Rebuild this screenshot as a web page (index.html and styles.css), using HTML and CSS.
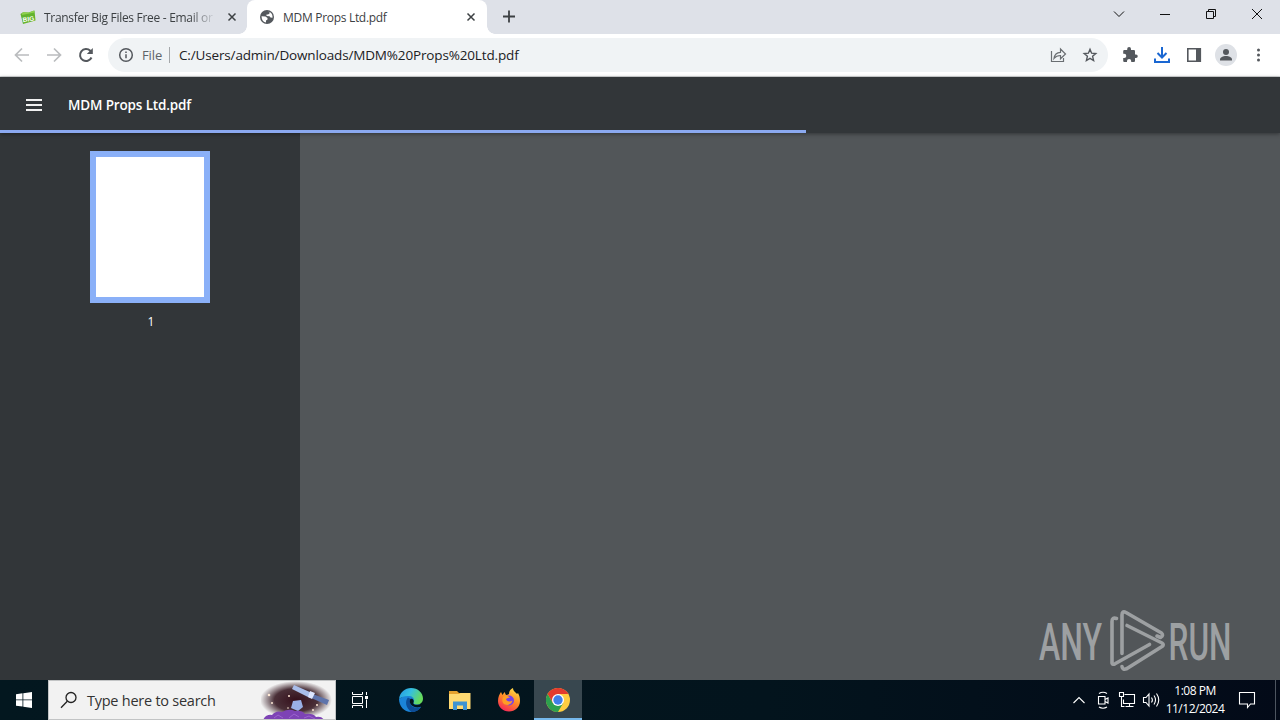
FILE: index.html
```html
<!DOCTYPE html>
<html lang="en">
<head>
  <meta charset="UTF-8">
  <meta name="viewport" content="width=device-width, initial-scale=1.0">
  <title>MDM Props Ltd.pdf</title>
  <link rel="stylesheet" href="styles.css">
</head>
<body>
  <!-- Tab strip -->
  <div class="tab-strip">
    <div class="tab">
      <svg class="favicon" width="16" height="16" viewBox="0 0 16 16">
        <path d="M.5 5 3 3.3l5.500.2L14.500 1.500 15.500 11.500 3 15z" fill="#63b32e"/>
        <path d="M2 4.500 3.500 3l5 .8 5.500-2.300.3 2L2 6z" fill="#8fd14f"/>
        <text class="favicon-text" x="2.500" y="12.500" transform="rotate(-9 8 9)">BIG</text>
      </svg>
      <span class="tab-title fade">Transfer Big Files Free - Email or</span>
      <svg class="tab-close" width="16" height="16" viewBox="0 0 16 16"><path d="M4.500 4.500l7 7M11.500 4.500l-7 7"/></svg>
    </div>
    <div class="tab active">
      <svg class="favicon" width="16" height="16" viewBox="0 0 16 16">
        <circle cx="8" cy="8" r="7" fill="#54585d"/>
        <path d="M2.500 7.200l4 .3 2 1.500v1.500l-1.500 1v2C4.500 13.200 2.500 11 2.500 7.200zM8.500 2.500l2 .5v1.500L9 5.500H7.500V7l3 .2 1 1.300 2 .2c.3-2-.5-4-2-5.200" fill="#fff"/>
      </svg>
      <span class="tab-title">MDM Props Ltd.pdf</span>
      <svg class="tab-close" width="16" height="16" viewBox="0 0 16 16"><path d="M4.500 4.500l7 7M11.500 4.500l-7 7"/></svg>
    </div>
    <svg class="new-tab" width="16" height="16" viewBox="0 0 16 16"><path d="M8 2.500v12M2 8.500h12"/></svg>
    <div class="window-controls">
      <svg width="46" height="28" viewBox="0 0 46 28"><path d="M18 11.500l5 5 5-5"/></svg>
      <svg width="46" height="28" viewBox="0 0 46 28"><path d="M18 14.500h10"/></svg>
      <svg width="46" height="28" viewBox="0 0 46 28"><path d="M18.500 11.500h7v7h-7zM20.500 11.500v-2h7v7h-2"/></svg>
      <svg width="46" height="28" viewBox="0 0 46 28"><path d="M18 9l10 10M28 9L18 19"/></svg>
    </div>
  </div>

  <!-- Toolbar -->
  <div class="toolbar">
    <svg class="tool disabled" width="32" height="32" viewBox="0 0 32 32"><path d="M23 16H10M16 9.500L9.500 16l6.500 6.500"/></svg>
    <svg class="tool disabled" width="32" height="32" viewBox="0 0 32 32"><path d="M9 16h13M16 9.500l6.500 6.500-6.500 6.500"/></svg>
    <svg class="tool" width="32" height="32" viewBox="0 0 32 32"><path d="M21.500 18.500a6 6 0 1 1-1.200-6.700l1.200 1.400"/><path d="M22.800 9v6h-6z" class="solid"/></svg>

    <div class="omnibox">
      <svg class="info" width="16" height="16" viewBox="0 0 16 16"><circle cx="8" cy="8" r="6.300"/><path d="M8 7.200v4M8 4.500v1.500"/></svg>
      <span class="scheme">File</span>
      <span class="url">C:/Users/admin/Downloads/MDM%20Props%20Ltd.pdf</span>
      <svg class="share" width="32" height="32" viewBox="0 0 32 32"><path d="M9.500 12v10.500h12V19"/><path d="M12 19.500c.5-4 3-6 6.500-6.200V10l5 5-5 4.800v-3.300c-2.800 0-4.800.8-6.500 3z"/></svg>
      <svg class="star" width="32" height="32" viewBox="0 0 32 32"><path d="M16 10.300l1.600 3.900 4.200.4-3.200 2.700 1 4.200-3.600-2.200-3.600 2.200 1-4.200-3.200-2.700 4.200-.4z"/></svg>
    </div>

    <svg class="tool" width="32" height="32" viewBox="0 0 32 32"><path class="solid" d="M22 15.500h-1V12.300c0-.8-.6-1.300-1.300-1.300H17v-1a1.900 1.900 0 0 0-3.800 0v1h-2.700c-.7 0-1.300.5-1.300 1.300v2.500h1a2.100 2.100 0 0 1 0 4.200h-1v2.700c0 .7.600 1.300 1.300 1.300H13v-1a2.100 2.100 0 0 1 4.200 0v1h2.500c.7 0 1.300-.6 1.300-1.300V19h1a1.750 1.750 0 0 0 0-3.500z"/></svg>
    <svg class="tool download" width="32" height="32" viewBox="0 0 32 32"><path d="M16 8v10M11.500 14l4.500 4.500 4.500-4.500M9 19.500v3.500h14v-3.500"/></svg>
    <svg class="tool panel" width="32" height="32" viewBox="0 0 32 32"><path d="M9.800 9.800h12.500v12.500H9.800z"/><path class="solid" d="M18 9h5v14h-5z"/></svg>
    <svg class="tool" width="32" height="32" viewBox="0 0 32 32"><circle class="avatar" cx="16" cy="16" r="11"/><circle class="solid" cx="16" cy="13" r="3"/><path class="solid" d="M10 21.500v-1c0-2.200 3-3.500 6-3.500s6 1.300 6 3.500v1z"/></svg>
    <svg class="tool" width="32" height="32" viewBox="0 0 32 32"><circle class="solid" cx="16.500" cy="11" r="1.500"/><circle class="solid" cx="16.500" cy="16" r="1.500"/><circle class="solid" cx="16.500" cy="21" r="1.500"/></svg>
  </div>

  <!-- PDF viewer -->
  <header class="pdf-header">
    <div class="menu-icon"><i></i><i></i><i></i></div>
    <h1>MDM Props Ltd.pdf</h1>
    <div class="progress"></div>
  </header>

  <main class="viewer">
    <aside class="sidebar">
      <div class="thumbnail"></div>
      <span class="page-number">1</span>
    </aside>
    <section class="page-area">
      <svg class="watermark" width="200" height="68" viewBox="0 0 200 68">
        <text x="3" y="53.500" textLength="63" lengthAdjust="spacingAndGlyphs">ANY</text>
        <text x="132.500" y="53.500" textLength="63" lengthAdjust="spacingAndGlyphs">RUN</text>
        <path d="M80.500 12.500q-4.500-1.500-4.500 3V57q.5 2 3 .8L113.500 38.500"/>
        <path d="M86 47.500V9q0-4.500 4-2.500L125.500 27q2.500 2.500-1 4.500l-3.500-1.500"/>
        <path d="M91 19.500L126 37q2.500 1.500 0 3.500L91 62.500q-4.500 2-5-2"/>
      </svg>
    </section>
  </main>

  <!-- Taskbar -->
  <footer class="taskbar">
    <div class="start">
      <svg width="16" height="16" viewBox="0 0 16 16"><path fill="#fff" d="M0 2.200l6.500-.9v6.200H0zM7.300 1.200L16 0v7.500H7.300zM0 8.300h6.500v6.300L0 13.700zM7.300 8.300H16V16l-8.700-1.200z"/></svg>
    </div>
    <div class="search">
      <svg class="magnifier" width="18" height="18" viewBox="0 0 18 18"><circle cx="11" cy="6.500" r="5"/><path d="M7.300 10.200L1 16.700"/></svg>
      <span>Type here to search</span>
      <svg class="doodle" width="74" height="38" viewBox="0 0 74 38">
        <defs>
          <radialGradient id="space">
            <stop offset="0" stop-color="#35101c"/>
            <stop offset=".6" stop-color="#4a3038"/>
            <stop offset="1" stop-color="#f2f2f2"/>
          </radialGradient>
        </defs>
        <ellipse cx="35" cy="19" rx="36" ry="19" fill="url(#space)"/>
        <path d="M33 4l18 8-2 5-18-9z" fill="#a9bde9"/>
        <path d="M49 12l19 7-2 5-18-8z" fill="#5f74ab"/>
        <path d="M49 10l5 2-3 6-4-2z" fill="#dce6ff"/>
        <path d="M32 20l8-1 2 7-5 4-7-3z" fill="#9ab0e6"/>
        <path d="M2 39q3-6 9-5 4-5 10-3 7-4 13-1 7-1 10 3 8-1 11 3 6-1 8 3z" fill="#7d43b5"/>
        <path d="M13 37l4-3 5 3M28 37l5-4 5 3M43 37l5-2 6 3" stroke="#9b64ce"/>
        <g fill="#ffe9d6"><circle cx="8" cy="14" r="1.300"/><circle cx="11" cy="22" r="1"/><circle cx="28" cy="15" r="1"/><circle cx="56" cy="24" r="1"/><circle cx="52" cy="29" r="1"/><circle cx="27" cy="27" r=".8"/></g>
      </svg>
    </div>
    <div class="task-view">
      <svg width="18" height="18" viewBox="0 0 18 18"><path d="M1.500 1v2.500h10V1M1.500 5.500h10v7h-10zM1.500 17v-2.500h10V17M15.500 1v3M15.500 8.500V17"/><path class="knob" d="M14 5h3v3h-3z"/></svg>
    </div>
    <div class="apps">
      <div class="app">
        <svg width="24" height="24" viewBox="0 0 24 24">
          <defs>
            <linearGradient id="edgeTop" x1="0" y1="0" x2="1" y2=".4"><stop offset="0" stop-color="#2496e3"/><stop offset=".5" stop-color="#35bfe0"/><stop offset="1" stop-color="#66db5c"/></linearGradient>
          </defs>
          <path d="M0 11C0 18 5 24 12 24c4 0 8-2 10-5l-3-6L9 5z" fill="#1b84d8"/>
          <path d="M0 11C1 4 6 0 12 0c7 0 12 5 12 10.500 0 4-3 6-6 6-2.500 0-4-1-3.500-2 1.500-2 .5-6-4-6.500C6 7.500 1.500 9 0 11z" fill="url(#edgeTop)"/>
          <path d="M9 9.500c-3 3-3 10 3.500 14.500 4 0 8-2 9.500-5-4 2-8 .5-10-2-1.500-2-1-4 .5-5.500z" fill="#0d4c95"/>
          <path d="M11.500 11c2-1 4 1.500 3 3.500-.8 1.500 1 2.300 3.500 2.300 3 0 5-1 5.500-2-.5 2-1 3-2 4.200-4 1-8 0-10-3-1-2-.8-4 0-5z" fill="#03141d"/>
        </svg>
      </div>
      <div class="app">
        <svg width="24" height="24" viewBox="0 0 24 24">
          <path d="M1 3h8l2 2h11v16H1z" fill="#e5a22f"/>
          <path d="M1 6h10l1.500-1H22.500v16H1z" fill="#ffda72"/>
          <path d="M5 22v-8.500h14V22h-4v-4.500H9V22z" fill="#3d93d2"/>
        </svg>
      </div>
      <div class="app">
        <svg width="24" height="24" viewBox="0 0 24 24">
          <defs><linearGradient id="fox" x1=".8" y1="0" x2=".3" y2="1"><stop offset="0" stop-color="#ffe14a"/><stop offset=".5" stop-color="#ff8a26"/><stop offset="1" stop-color="#f72658"/></linearGradient></defs>
          <path d="M1 13C1 9 2.500 6 4 4l1.500 3 2-3 1.500 3c1 0 2-.3 3-1 0-3 1.500-5 4-6 0 3 2.500 4 4 6l1-1c1.500 2.500 2 5 2 8 0 6-5 10.500-11 10.500S1 19 1 13z" fill="url(#fox)"/>
          <circle cx="12" cy="12.500" r="5" fill="#7641e8"/>
          <path d="M6 9c2-2 5-1.500 7 .5-2 0-2.500 1-4 1.500.5 2 3 3.500 6.500 1.500-.5 4-6 6-9 3C5 14 5 11 6 9z" fill="#ff9d24"/>
        </svg>
      </div>
      <div class="app running">
        <svg width="24" height="24" viewBox="0 0 24 24">
          <circle cx="12" cy="12" r="12" fill="#ffcd40"/>
          <path d="M1.600 6A12 12 0 0 1 22.400 6H12L6.800 15z" fill="#e33b2e"/>
          <path d="M1.600 6A12 12 0 0 0 12 24l5.200-9H6.800z" fill="#2da04e"/>
          <circle cx="12" cy="12" r="6" fill="#fff"/>
          <circle cx="12" cy="12" r="4.700" fill="#3f7fe8"/>
        </svg>
      </div>
    </div>
    <div class="tray">
      <svg width="24" height="24" viewBox="0 0 24 24"><path d="M6.500 15l5.500-5.500 5.500 5.500"/></svg>
      <svg width="24" height="24" viewBox="0 0 24 24"><path d="M7.500 8.500h6.500v7.500H7.500zM14 11.500l3-1.500v5l-3-1.500M8 5.500q4-2.500 8 0M8 19q4 2.500 8 0"/></svg>
      <svg width="24" height="24" viewBox="0 0 24 24"><path d="M9.500 6.500h10v9h-11v-4M14.500 15.500v3M10.500 18.500h8M4.500 4.500h4v4h-4zM6.500 8.500v10h3"/></svg>
      <svg width="24" height="24" viewBox="0 0 24 24"><path d="M4.500 9.500h2.500l3-3.500v12l-3-3.500H4.500zM12.500 9.500q1.800 2.500 0 5M15 7.500q3 4.500 0 9M17.500 5.500q4.500 6.500 0 13"/></svg>
      <div class="clock"><span>1:08 PM</span><span>11/12/2024</span></div>
      <svg class="action-center" width="24" height="24" viewBox="0 0 24 24"><path d="M4.500 4.500h15v11.500h-4l-3 3.500v-3.500h-8z"/></svg>
      <div class="show-desktop"></div>
    </div>
  </footer>
</body>
</html>
```
FILE: styles.css
```css
* {
  box-sizing: border-box;
  margin: 0;
  padding: 0;
}

body {
  display: flex;
  flex-direction: column;
  width: 1280px;
  height: 720px;
  overflow: hidden;
  font-family: "Open Sans", "Noto Sans", sans-serif;
  background-color: #525659;
}

svg {
  display: block;
  flex: none;
  fill: none;
}

span,
h1 {
  white-space: nowrap;
}

/* Tab strip */
.tab-strip {
  display: flex;
  height: 34px;
  background-color: #dee1e8;
}

.tab {
  display: flex;
  align-items: center;
  width: 240px;
  padding: 0 8px 0 12px;
  color: #3c4043;
}

.tab:first-child {
  width: 247px;
  padding: 0 7px 0 20px;
}

.tab.active {
  position: relative;
  background-color: #fff;
  border-radius: 8px 8px 0 0;
}

/* Outward curves at the foot of the active tab */
.tab.active::before,
.tab.active::after {
  content: "";
  position: absolute;
  bottom: 0;
  width: 8px;
  height: 8px;
}

.tab.active::before {
  left: -8px;
  background: radial-gradient(circle at 0 0, transparent 7.5px, #fff 8px);
}

.tab.active::after {
  right: -8px;
  background: radial-gradient(circle at 100% 0, transparent 7.5px, #fff 8px);
}

.favicon {
  margin-right: 8px;
}

.favicon-text {
  font-family: "Liberation Sans", sans-serif;
  font-size: 6.5px;
  font-weight: bold;
  fill: #fff;
}

.tab-title {
  flex: 1;
  font-size: 12px;
  letter-spacing: -0.3px;
}

.tab-title.fade {
  -webkit-mask-image: linear-gradient(to right, #000 145px, transparent 172px);
  mask-image: linear-gradient(to right, #000 145px, transparent 172px);
}

.tab-close {
  stroke: #3c4043;
  stroke-width: 1.5;
}

.new-tab {
  margin: 8px 0 0 14px;
  stroke: #3c4043;
  stroke-width: 1.8;
}

.window-controls {
  display: flex;
  margin-left: auto;
  stroke: #111;
}

/* Toolbar */
.toolbar {
  display: flex;
  align-items: center;
  height: 43px;
  padding: 0 6px;
  background-color: #fff;
  border-bottom: 1px solid #d5d8d9;
}

.tool {
  stroke: #54585d;
  stroke-width: 2;
}

.tool.disabled {
  stroke: #babcbe;
  stroke-width: 1.7;
}

.tool.download {
  stroke: #1a67d2;
}

.tool.panel {
  stroke-width: 1.6;
}

.solid {
  fill: #54585d;
  stroke: none;
}

.avatar {
  fill: #dee1e6;
  stroke: none;
}

.omnibox {
  display: flex;
  align-items: center;
  width: 1000px;
  height: 34px;
  margin: 0 6px;
  padding: 0 2px 0 10px;
  border-radius: 17px;
  background-color: #f0f3f5;
}

.info {
  margin-right: 8px;
  stroke: #54585d;
  stroke-width: 1.5;
}

.scheme {
  width: 28px;
  border-right: 1px solid #a4a7aa;
  line-height: 16px;
  font-size: 13px;
  letter-spacing: -0.1px;
  color: #5f6368;
}

.url {
  flex: 1;
  margin-left: 9px;
  font-size: 13.5px;
  letter-spacing: -0.15px;
  color: #202124;
}

.share {
  stroke: #6a6e72;
  stroke-width: 1.2;
}

.star {
  stroke: #54585d;
  stroke-width: 1.4;
}

/* PDF viewer */
.pdf-header {
  position: relative;
  z-index: 1;
  display: flex;
  align-items: center;
  height: 56px;
  padding-left: 26px;
  background-color: #323639;
  color: #fff;
  box-shadow: 0 1px 4px rgba(0, 0, 0, 0.4);
}

.menu-icon {
  display: flex;
  flex-direction: column;
  gap: 3px;
  width: 16px;
  margin-right: 26px;
}

.menu-icon i {
  height: 2px;
  background-color: #f1f1f1;
}

.pdf-header h1 {
  font-size: 13.5px;
  font-weight: 600;
  letter-spacing: -0.15px;
}

.progress {
  position: absolute;
  left: 0;
  bottom: 0;
  width: 806px;
  height: 3px;
  background-color: #8ba9f0;
}

.viewer {
  display: flex;
  height: 547px;
}

.sidebar {
  display: flex;
  flex-direction: column;
  align-items: center;
  width: 300px;
  padding-top: 18px;
  background-color: #323639;
}

.thumbnail {
  width: 120px;
  height: 152px;
  border: 6px solid #8ab0f8;
  background-color: #fff;
}

.page-number {
  margin-top: 10px;
  padding-left: 2px;
  line-height: 18px;
  font-size: 12px;
  color: #fff;
}

.page-area {
  display: flex;
  flex: 1;
  align-items: flex-end;
  justify-content: flex-end;
  padding: 0 44px 6px 0;
}

.watermark {
  stroke: #9da0a2;
  stroke-width: 3.6;
  stroke-linecap: round;
  stroke-linejoin: round;
}

.watermark text {
  font-family: Roboto, sans-serif;
  font-size: 52px;
  font-weight: 500;
  fill: #9da0a2;
  stroke: none;
}

/* Taskbar */
.taskbar {
  display: flex;
  height: 40px;
  background: linear-gradient(to right, #03171f, #03141d 60%, #030a18);
  color: #fff;
}

.start {
  display: flex;
  align-items: center;
  justify-content: center;
  width: 48px;
}

.search {
  display: flex;
  align-items: center;
  width: 288px;
  padding-left: 11px;
  background-color: #f2f2f2;
  border: 1px solid #c2c4c5;
  color: #333;
}

.magnifier {
  margin-right: 9px;
  stroke: #222;
  stroke-width: 1.3;
}

.search span {
  flex: 1;
  font-size: 14.5px;
  letter-spacing: -0.25px;
}

.task-view {
  display: flex;
  align-items: center;
  justify-content: center;
  width: 48px;
  stroke: #fff;
}

.knob {
  fill: #fff;
  stroke: none;
}

.apps {
  display: flex;
  gap: 1px;
  margin-left: 3px;
}

.app {
  display: flex;
  align-items: center;
  justify-content: center;
  width: 48px;
}

.app.running {
  background-color: #38474f;
  box-shadow: inset 0 -2px #76b9ed;
}

.tray {
  display: flex;
  align-items: center;
  margin-left: auto;
  stroke: #fff;
  stroke-width: 1.1;
}

.clock {
  display: flex;
  flex-direction: column;
  align-items: center;
  width: 64px;
  line-height: 18px;
  font-size: 12px;
  letter-spacing: -0.5px;
}

.action-center {
  margin: 0 16px 0 8px;
}

.show-desktop {
  width: 5px;
  height: 40px;
  border-left: 1px solid #4d5560;
}
```
